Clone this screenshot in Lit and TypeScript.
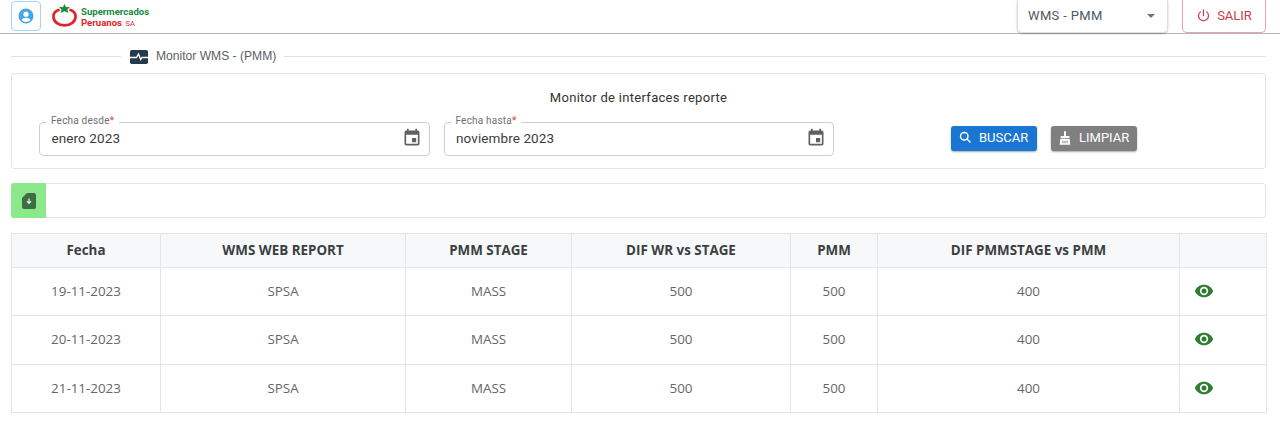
import { LitElement, html, css } from "lit";
import { customElement } from "lit/decorators.js";

const rows = ["19-11-2023", "20-11-2023", "21-11-2023"];
const calendar = html`<svg viewBox="0 0 24 24" width="20" height="20"><path fill="#616161" d="M17 12h-5v5h5v-5zM16 1v2H8V1H6v2H5c-1.110 0-1.990.9-1.990 2L3 19c0 1.100.89 2 2 2h14c1.100 0 2-.9 2-2V5c0-1.100-.9-2-2-2h-1V1h-2zm3 18H5V8h14v11z"/></svg>`;

@customElement("app-root")
export class AppRoot extends LitElement {
  static styles = css`
    :host { display: block; width: 1280px; height: 447px; background: #fff; font-family: Roboto, "Liberation Sans", sans-serif; color: #333; overflow: hidden; }
    * { box-sizing: border-box; }
    .top { height: 34px; border-bottom: 1px solid #b5b5b5; display: flex; align-items: flex-start; }
    .user { margin: 1px 0 0 11px; width: 30px; height: 30px; border: 1px solid #a9d5f5; border-radius: 4px; display: flex; align-items: center; justify-content: center; }
    .logo { margin: 3px 0 0 11px; display: flex; gap: 4px; }
    .logo-text { font: 700 9.6px/11px Roboto, sans-serif; padding-top: 3px; }
    .g { color: #1b8a3f; display: block; }
    .r { color: #e0262b; display: block; }
    .r small { font-size: 7.5px; margin-left: 1px; font-weight: 400; }
    .spacer { flex: 1; }
    .sel { width: 151px; height: 33px; border: 1px solid #ddd; border-top: 0; border-radius: 0 0 5px 5px; display: flex; align-items: center; justify-content: space-between; padding: 0 12px 1px 10px; font-size: 13px; letter-spacing: .35px; color: #4d5a62; box-shadow: 0 1px 2px rgba(0,0,0,.25); }
    .caret { width: 0; height: 0; border: 4.5px solid transparent; border-top: 4.5px solid #757575; border-bottom: 0; }
    .salir { margin: 0 14px 0 14px; width: 84px; height: 33px; border: 1px solid #e3a6ab; border-top: 0; border-radius: 0 0 5px 5px; display: flex; align-items: center; justify-content: center; gap: 6px; color: #c9404b; font-size: 13px; padding-bottom: 2px; }
    .title { height: 23px; margin: 11px 0 0 11px; width: 1255px; display: flex; align-items: center; }
    .line { height: 1px; background: #e0e0e0; }
    .l1 { width: 110px; margin-right: 9px; }
    .l2 { flex: 1; margin-left: 8px; }
    .title span { font: 12.1px "Liberation Sans", sans-serif; color: #5a6066; margin-left: 8px; padding-bottom: 2px; }
    .card { margin: 5px 14px 0 11px; height: 96px; border: 1px solid #e4e4e4; border-radius: 3px; display: flex; flex-direction: column; align-items: center; }
    .card h1 { margin: 15px 0 0; font: 400 13px/18px Roboto, sans-serif; letter-spacing: .3px; color: #333; }
    .form { display: flex; align-items: flex-start; margin-top: 15px; width: 100%; padding-left: 27px; }
    .field { position: relative; width: 390.5px; height: 34px; margin-right: 14px; border: 1px solid #cfcfcf; border-radius: 4px; display: flex; align-items: center; justify-content: space-between; padding: 0 7px 2px 11.5px; font-size: 13.5px; letter-spacing: .1px; color: #3c3c3c; }
    .legend { position: absolute; left: 6px; top: -8px; background: #fff; padding: 0 5px; font-size: 10px; line-height: 12px; color: #6f6f6f; letter-spacing: .2px; }
    .legend b { color: #e53935; font-weight: 400; }
    .btns { display: flex; gap: 14px; margin: 4px 0 0 103px; }
    .btn { height: 25px; border-radius: 3px; color: #fff; display: flex; align-items: center; font-size: 13px; box-shadow: 0 1px 2px rgba(0,0,0,.35); padding-bottom: 2px; }
    .b { width: 86px; background: #1976d2; padding-left: 7px; gap: 6px; }
    .c { width: 86px; background: #7f7f7f; padding-left: 6px; gap: 6px; }
    .dl { margin: 14px 14px 0 11px; height: 35px; border: 1px solid #e4e4e4; border-radius: 3px; display: flex; }
    .dlb { width: 35px; margin: -1px 0 -1px -1px; background: #8be88b; border-radius: 3px 0 0 3px; display: flex; align-items: center; justify-content: center; }
    table { margin: 15px 0 0 11px; border-collapse: collapse; table-layout: fixed; width: 1255px; font: 13.4px "Open Sans", sans-serif; color: #666; }
    th, td { border: 1px solid #e3e6e8; text-align: center; padding: 0 0 1px; }
    th { height: 34px; padding-bottom: 2px; background: #f7f8fa; color: #3b3f43; font-weight: 700; }
    td { height: 48.3px; }
    td svg { display: block; margin: 0 0 0 14px; }
    .c1 { width: 149px; } .c2 { width: 245px; } .c3 { width: 166px; } .c4 { width: 219px; } .c5 { width: 87px; } .c6 { width: 302px; } .c7 { width: 87px; }
  `;

  render() {
    return html`
      <div class="top">
        <div class="user"><svg viewBox="0 0 24 24" width="18" height="18"><path fill="#42a5e8" d="M12 2a10 10 0 1 0 0 20 10 10 0 0 0 0-20zm0 4a3.5 3.5 0 1 1 0 7 3.5 3.5 0 0 1 0-7zm0 14a8 8 0 0 1-6-2.8c1-1.900 3.500-2.800 6-2.800s5 .9 6 2.800a8 8 0 0 1-6 2.800z"/></svg></div>
        <div class="logo">
          <svg viewBox="0 0 26 26" width="25" height="25">
            <path fill="none" stroke="#e0262b" stroke-width="2.8" d="M8 7C3.500 8 1.500 10.500 1.500 14c0 5.500 5 9.300 11.500 9.300S24.500 19.500 24.500 14c0-3.500-2-6-6.500-7"/>
            <path fill="#1b8a3f" d="M13 1l1.700 3.500 4-.5-2.700 3 1 3.500-4-1.800-4 1.800 1-3.500-2.700-3 4 .5z"/>
          </svg>
          <div class="logo-text"><span class="g">Supermercados</span><span class="r">Peruanos <small>SA</small></span></div>
        </div>
        <div class="spacer"></div>
        <div class="sel">WMS - PMM<i class="caret"></i></div>
        <div class="salir"><svg viewBox="0 0 24 24" width="15" height="15"><path fill="none" stroke="#c9404b" stroke-width="2" stroke-linecap="round" d="M12 3v9M7 6.200a8 8 0 1 0 10 0"/></svg>SALIR</div>
      </div>
      <div class="title">
        <div class="line l1"></div>
        <svg viewBox="0 0 18 14" width="18" height="14"><rect width="18" height="14" rx="1.800" fill="#263a4d"/><path fill="none" stroke="#fff" stroke-width="1.300" d="M0 7.500h6.500L8.500 4l2.200 5.500L12 7.500h6"/></svg>
        <span>Monitor WMS - (PMM)</span>
        <div class="line l2"></div>
      </div>
      <div class="card">
        <h1>Monitor de interfaces reporte</h1>
        <div class="form">
          <div class="field"><span class="legend">Fecha desde<b>*</b></span>enero 2023${calendar}</div>
          <div class="field"><span class="legend">Fecha hasta<b>*</b></span>noviembre 2023${calendar}</div>
          <div class="btns">
            <div class="btn b"><svg viewBox="0 0 24 24" width="15" height="15"><path fill="none" stroke="#fff" stroke-width="2.200" d="M10 4a6 6 0 1 0 0 12 6 6 0 0 0 0-12zM14.500 14.500L20 20"/></svg>BUSCAR</div>
            <div class="btn c"><svg viewBox="0 0 24 24" width="16" height="16"><path fill="#fff" d="M10.500 2h3v7h5v3h-13V9h5zM5 13h14l1 9H4zm3 3v4h1.500v-4zm3.200 0v4h1.600v-4zm3.300 0v4H16v-4z"/></svg>LIMPIAR</div>
          </div>
        </div>
      </div>
      <div class="dl"><div class="dlb"><svg viewBox="0 0 14 16" width="14" height="16"><path fill="#3f6b45" d="M5 0h7a2 2 0 0 1 2 2v12a2 2 0 0 1-2 2H2a2 2 0 0 1-2-2V5z"/><path fill="none" stroke="#dff3df" stroke-width="1.300" d="M7 5.500v4.500M5 8.200l2 2.200 2-2.200"/></svg></div></div>
      <table>
        <colgroup><col class="c1"><col class="c2"><col class="c3"><col class="c4"><col class="c5"><col class="c6"><col class="c7"></colgroup>
        <thead><tr><th>Fecha</th><th>WMS WEB REPORT</th><th>PMM STAGE</th><th>DIF WR vs STAGE</th><th>PMM</th><th>DIF PMMSTAGE vs PMM</th><th></th></tr></thead>
        <tbody>
          ${rows.map((d) => html`<tr><td>${d}</td><td>SPSA</td><td>MASS</td><td>500</td><td>500</td><td>400</td><td><svg viewBox="0 0 24 24" width="20" height="20"><path fill="#2e7d32" d="M12 4.500C7 4.500 2.700 7.600 1 12c1.700 4.400 6 7.500 11 7.500s9.300-3.100 11-7.500c-1.700-4.400-6-7.500-11-7.500zM12 17a5 5 0 1 1 0-10 5 5 0 0 1 0 10zm0-8a3 3 0 1 0 0 6 3 3 0 0 0 0-6z"/></svg></td></tr>`)}
        </tbody>
      </table>
    `;
  }
}
